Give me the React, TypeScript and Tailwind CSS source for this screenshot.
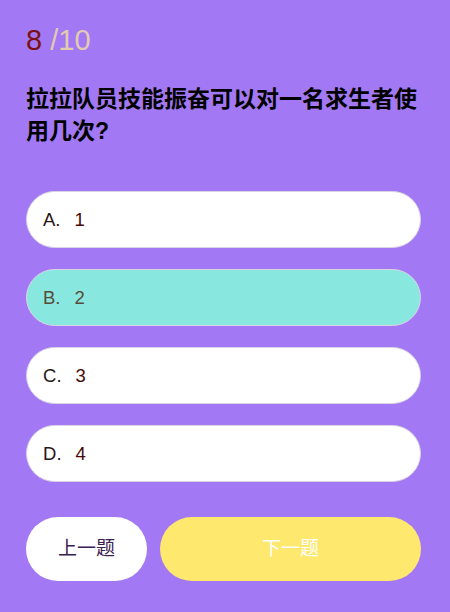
import { useState } from "react";

const options = [
  { key: "A", text: "1" },
  { key: "B", text: "2" },
  { key: "C", text: "3" },
  { key: "D", text: "4" },
];

export default function App() {
  const [picked, setPicked] = useState("B");

  return (
    <div
      className="w-[450px] h-[612px] bg-[#a278f4] pl-[26px] pr-[29px] pt-[22px] overflow-hidden"
      style={{ fontFamily: '"Liberation Sans", "Noto Sans CJK SC", sans-serif' }}
    >
      <div className="text-[29px] leading-[36px]">
        <span className="text-[#7a1212]">8</span>
        <span className="text-[#e3cbb0]"> /10</span>
      </div>

      <h1 className="mt-[25px] text-[23px] leading-[32px] font-bold text-black">
        拉拉队员技能振奋可以对一名求生者使用几次?
      </h1>

      <div className="mt-[44px] flex flex-col gap-[21px]">
        {options.map((o) => {
          const on = o.key === picked;
          return (
            <button
              key={o.key}
              type="button"
              onClick={() => setPicked(o.key)}
              className={`h-[57px] w-full rounded-full border border-[#d9d4e4] flex items-center px-[16px] text-[18.5px] ${
                on ? "bg-[#88e8e0] text-[#5a4a3a]" : "bg-white text-[#2a1414]"
              }`}
            >
              <span>{o.key}.</span>
              <span className={`ml-[14px] ${on ? "" : "text-[#4a0808]"}`}>{o.text}</span>
            </button>
          );
        })}
      </div>

      <div className="mt-[35px] flex gap-[13px]">
        <button
          type="button"
          className="h-[64px] w-[121px] rounded-full bg-white text-[19px] text-[#3a2050]"
        >
          上一题
        </button>
        <button
          type="button"
          className="h-[64px] flex-1 rounded-full bg-[#ffe86e] text-[19px] text-white"
        >
          下一题
        </button>
      </div>
    </div>
  );
}
